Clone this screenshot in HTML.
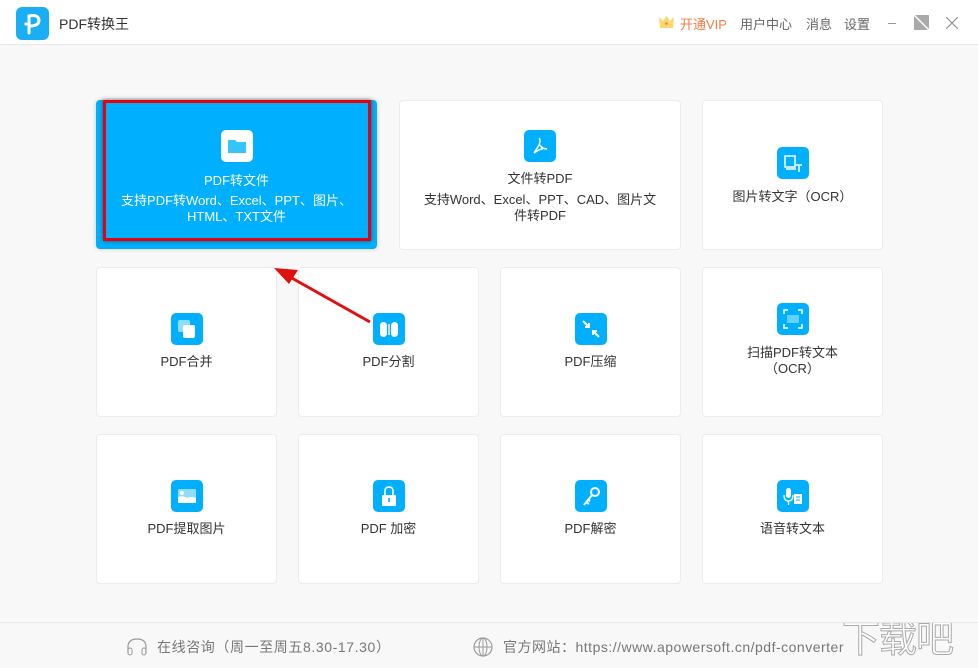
<!DOCTYPE html><html><head><meta charset="utf-8"><style>
*{margin:0;padding:0;box-sizing:border-box}
html,body{width:978px;height:668px;overflow:hidden}
body{background:#f8f8f8;font-family:"Liberation Sans","Noto Sans CJK SC",sans-serif;position:relative;color:#333}
.hdr{position:absolute;left:0;top:0;width:978px;height:45px;background:#fff;border-bottom:1px solid #e6e6e6}
.logo{position:absolute;left:16px;top:7px;width:33px;height:33px;border-radius:6px;background:#1aaef5}
.title{position:absolute;left:59px;top:14px;font-size:14px;color:#333}
.nav{position:absolute;top:14px;font-size:13px;color:#666}
.card{position:absolute;background:#fff;border:1px solid #ececec;border-radius:4px;text-align:center;font-size:13px;color:#333}
.ic{position:absolute;width:32px;height:32px;border-radius:5px;background:#00b0fe;left:50%;margin-left:-16px}
.ic svg{width:32px;height:32px}
.lbl{position:absolute;left:0;right:0;line-height:16px}
.foot{position:absolute;left:0;top:622px;width:978px;height:46px;border-top:1px solid #e6e6e6;font-size:14px;color:#777;overflow:hidden}
</style></head><body>
<div class="hdr">
<div class="logo"><svg width="33" height="33" viewBox="0 0 33 33"><path d="M13 26 L13 9 Q22 7 23 13 Q23 19 14 19" stroke="#fff" stroke-width="3" fill="none" stroke-linecap="round"/><circle cx="10" cy="17" r="1.6" fill="#fff"/></svg></div>
<div class="title">PDF转换王</div>
<svg style="position:absolute;left:658px;top:15px" width="17" height="14" viewBox="0 0 17 14"><path d="M1 2 L5 6 L8.5 1 L12 6 L16 2 L15 13 L2 13 Z" fill="#fcd86a"/><circle cx="8.5" cy="8.5" r="1.3" fill="#f27a4a"/></svg>
<div class="nav" style="left:680px;color:#f47b42">开通VIP</div>
<div class="nav" style="left:740px">用户中心</div>
<div class="nav" style="left:806px">消息</div>
<div class="nav" style="left:844px">设置</div>
<div style="position:absolute;left:888px;top:23px;width:8px;height:1px;background:#999"></div>
<svg style="position:absolute;left:914px;top:15px" width="15" height="15"><path d="M0 0 H15 L0 15Z M15 0 V15 H0Z" fill="#aaa"/><path d="M0 0 L15 15" stroke="#fff" stroke-width="1.5"/></svg>
<svg style="position:absolute;left:946px;top:17px" width="12" height="12"><path d="M0 0L12 12M12 0L0 12" stroke="#999" stroke-width="1.2"/></svg>
</div>

<div class="card" style="left:96px;top:100px;width:281px;height:149px;background:#00b0fe;border-color:#00b0fe;color:#fff;box-shadow:0 0 4px rgba(0,0,0,.2)">
<div class="ic" style="top:29px;background:#fff"><svg viewBox="0 0 32 32"><path d="M7 10 H14 L16 12 H25 V23 H7Z" fill="#33c5fc"/></svg></div>
<div class="lbl" style="top:72px;font-size:13px">PDF转文件</div>
<div class="lbl" style="top:92px">支持PDF转Word、Excel、PPT、图片、<br>HTML、TXT文件</div>
</div>
<div style="position:absolute;left:103px;top:100px;width:268px;height:141px;border:3px solid #e8000b;box-shadow:0 0 4px rgba(0,0,0,.5)"></div>

<div class="card" style="left:399px;top:100px;width:282px;height:150px">
<div class="ic" style="top:29px"><svg viewBox="0 0 32 32"><path d="M15 8 Q17 10 15 15 L10 23 Q18 17 23 19 Q18 19 15 14" stroke="#fff" stroke-width="1.5" fill="none"/></svg></div>
<div class="lbl" style="top:70px">文件转PDF</div>
<div class="lbl" style="top:91px">支持Word、Excel、PPT、CAD、图片文<br>件转PDF</div>
</div>
<div class="card" style="left:702px;top:100px;width:181px;height:150px">
<div class="ic" style="top:46px"><svg viewBox="0 0 32 32"><rect x="8" y="9" width="10" height="11" fill="none" stroke="#fff" stroke-width="1.5"/><path d="M9 22H19M19 18H25M22 18V25" stroke="#fff" stroke-width="1.5"/></svg></div>
<div class="lbl" style="top:88px">图片转文字（OCR）</div>
</div>

<div class="card" style="left:96px;top:267px;width:181px;height:150px">
<div class="ic" style="top:45px"><svg viewBox="0 0 32 32"><rect x="7" y="7" width="12" height="12" rx="2" fill="#8fdcff"/><rect x="12" y="12" width="12" height="13" rx="2" fill="#fff"/></svg></div>
<div class="lbl" style="top:86px">PDF合并</div>
</div>
<div class="card" style="left:298px;top:267px;width:181px;height:150px">
<div class="ic" style="top:45px"><svg viewBox="0 0 32 32"><rect x="7" y="9" width="7" height="15" rx="3.5" fill="#fff"/><rect x="18" y="9" width="7" height="15" rx="3.5" fill="#fff"/><rect x="15.3" y="11" width="1.4" height="11" fill="#fff"/></svg></div>
<div class="lbl" style="top:86px">PDF分割</div>
</div>
<div class="card" style="left:500px;top:267px;width:181px;height:150px">
<div class="ic" style="top:45px"><svg viewBox="0 0 32 32"><path d="M8 8L14 14M10 14H14V10M24 24L18 18M22 18H18V22" stroke="#fff" stroke-width="2" fill="none"/></svg></div>
<div class="lbl" style="top:86px">PDF压缩</div>
</div>
<div class="card" style="left:702px;top:267px;width:181px;height:150px">
<div class="ic" style="top:35px"><svg viewBox="0 0 32 32"><path d="M7 11V7H11M21 7H25V11M25 21V25H21M11 25H7V21" stroke="#fff" stroke-width="1.6" fill="none"/><path d="M11 12V20M13 12V20M15 12V20M17 12V20M19 12V20M21 12V20" stroke="#fff" stroke-width=".8"/></svg></div>
<div class="lbl" style="top:77px">扫描PDF转文本<br>（OCR）</div>
</div>

<div class="card" style="left:96px;top:434px;width:181px;height:150px">
<div class="ic" style="top:45px"><svg viewBox="0 0 32 32"><rect x="7" y="9" width="18" height="14" rx="1" fill="#8fdcff"/><path d="M7 23V17Q12 15 16 18Q20 16 25 18V23Z" fill="#fff"/><circle cx="11" cy="13" r="2" fill="#fff"/></svg></div>
<div class="lbl" style="top:86px">PDF提取图片</div>
</div>
<div class="card" style="left:298px;top:434px;width:181px;height:150px">
<div class="ic" style="top:45px"><svg viewBox="0 0 32 32"><path d="M12 15V11Q12 7 16 7Q20 7 20 11V15" stroke="#fff" stroke-width="1.6" fill="none"/><rect x="9" y="15" width="14" height="11" rx="1" fill="#fff"/><rect x="15.2" y="18" width="1.6" height="4" fill="#00b0fe"/></svg></div>
<div class="lbl" style="top:86px">PDF 加密</div>
</div>
<div class="card" style="left:500px;top:434px;width:181px;height:150px">
<div class="ic" style="top:45px"><svg viewBox="0 0 32 32"><circle cx="20" cy="12" r="4" stroke="#fff" stroke-width="2" fill="none"/><path d="M17 15L9 25M11 22L14 24M13 20L15 21" stroke="#fff" stroke-width="2"/></svg></div>
<div class="lbl" style="top:86px">PDF解密</div>
</div>
<div class="card" style="left:702px;top:434px;width:181px;height:150px">
<div class="ic" style="top:45px"><svg viewBox="0 0 32 32"><rect x="9" y="8" width="5" height="10" rx="2.5" fill="#fff"/><path d="M7 15Q7 21 11.5 21Q16 21 16 15M11.5 21V25" stroke="#fff" stroke-width="1.3" fill="none"/><rect x="17" y="14" width="8" height="10" fill="#fff"/><path d="M19 17H23M19 20H23" stroke="#00b0fe" stroke-width="1"/></svg></div>
<div class="lbl" style="top:86px">语音转文本</div>
</div>

<svg style="position:absolute;left:0;top:0" width="978" height="668"><path d="M370 322 L290 277" stroke="#e01010" stroke-width="3"/><path d="M274 268 L298 270 L289 284Z" fill="#e01010"/></svg>

<div class="foot">
<svg style="position:absolute;left:125px;top:14px" width="24" height="20"><path d="M3 16V10Q3 2 12 2Q21 2 21 10V16" stroke="#999" stroke-width="1.2" fill="none"/><rect x="3" y="11" width="4" height="7" rx="2" fill="none" stroke="#999"/><rect x="17" y="11" width="4" height="7" rx="2" fill="none" stroke="#999"/></svg>
<div style="position:absolute;left:157px;top:14px;letter-spacing:0.6px">在线咨询（周一至周五8.30-17.30）</div>
<svg style="position:absolute;left:472px;top:13px" width="22" height="22"><circle cx="11" cy="11" r="9" stroke="#999" fill="none" stroke-width="1.2"/><ellipse cx="11" cy="11" rx="4" ry="9" stroke="#999" fill="none"/><path d="M2 11H20M11 2V20" stroke="#999"/></svg>
<div style="position:absolute;left:503px;top:14px;letter-spacing:0.5px">官方网站：https://www.apowersoft.cn/pdf-converter</div>
<div style="position:absolute;left:842px;top:-6px;font-size:38px;line-height:46px;color:#fff;-webkit-text-stroke:1px #aaa;letter-spacing:-1px">下载吧</div>
</div>
</body></html>
